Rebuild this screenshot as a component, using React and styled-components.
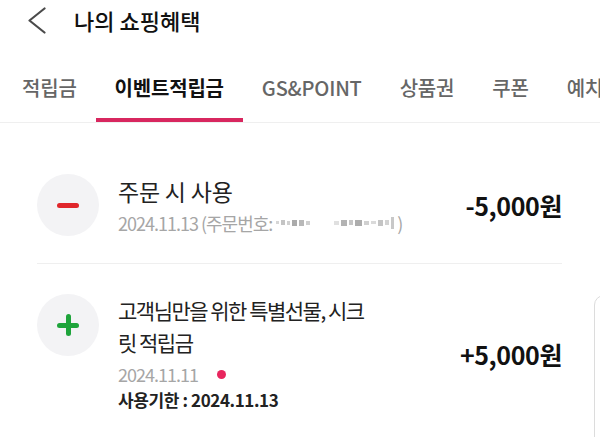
import React from "react";
import styled, { createGlobalStyle } from "styled-components";

const FONT = `"Noto Sans CJK KR", "Noto Sans", sans-serif`;

const GlobalStyle = createGlobalStyle`
  html, body {
    margin: 0;
    padding: 0;
    background: #ffffff;
  }
  body {
    font-family: ${FONT};
    color: #222;
    overflow: hidden;
  }
`;

const TABS = ["적립금", "이벤트적립금", "GS&POINT", "상품권", "쿠폰", "예치금"];
const ACTIVE_TAB = 1;

// pixelated order number: [width, height, shade]
const MASK = [
  [3, 3, "#d6d6d6"], [4, 5, "#c4c4c4"], [3, 4, "#d0d0d0"], [5, 6, "#ababab"], [5, 6, "#b8b8b8"], [4, 4, "#cfcfcf"],
  [20, 0, "transparent"], [5, 4, "#e0e0e0"], [6, 6, "#b3b3b3"], [4, 5, "#c6c6c6"], [7, 6, "#adadad"],
  [5, 4, "#d0d0d0"], [5, 3, "#dadada"], [5, 6, "#c4c4c4"], [4, 5, "#d2d2d2"], [3, 12, "#c8c8c8"],
];

const Page = styled.div`
  position: relative;
  width: 600px;
  height: 437px;
  overflow: hidden;
  background: #fff;
`;

const Header = styled.div`
  display: flex;
  align-items: center;
  gap: 28px;
  height: 40px;
  padding: 0 0 0 28px;
`;

const BackButton = styled.button`
  display: flex;
  padding: 0;
  border: 0;
  background: none;
  cursor: pointer;
`;

const HeaderTitle = styled.h1`
  margin: 0;
  font-family: ${FONT};
  font-size: 22px;
  font-weight: 500;
  letter-spacing: 0;
  color: #111;
`;

const TabBar = styled.div`
  display: flex;
  margin-top: 16px;
  padding-left: 3px;
  border-bottom: 1px solid #efefef;
  white-space: nowrap;
  overflow: hidden;
`;

const Tab = styled.div`
  flex: none;
  padding: 18px 19px 16px;
  font-size: 20px;
  line-height: 28px;
  letter-spacing: -0.2px;
  font-weight: ${({ $active }) => ($active ? 700 : 500)};
  color: ${({ $active }) => ($active ? "#111" : "#666")};
  border-bottom: 4px solid ${({ $active }) => ($active ? "#d8275f" : "transparent")};
`;

const List = styled.div`
  padding: 21px 38px 0 37px;
`;

const Row = styled.div`
  display: flex;
  align-items: center;
  padding: 30px 0 27px;
  border-bottom: ${({ $last }) => ($last ? "none" : "1px solid #efefef")};
`;

const IconCircle = styled.div`
  position: relative;
  flex: none;
  align-self: flex-start;
  width: 62px;
  height: 62px;
  border-radius: 50%;
  background: #f3f3f5;
  display: flex;
  align-items: center;
  justify-content: center;
`;

const Bar = styled.span`
  position: absolute;
  width: ${({ $vertical }) => ($vertical ? "5px" : "22px")};
  height: ${({ $vertical }) => ($vertical ? "22px" : "5px")};
  border-radius: 3px;
  background: ${({ $color }) => $color};
`;

const Body = styled.div`
  flex: 1;
  min-width: 0;
  margin-left: 19px;
`;

const Title = styled.div`
  width: 252px;
  font-size: ${({ $size }) => $size}px;
  letter-spacing: ${({ $spacing }) => $spacing}px;
  line-height: 32px;
  color: #222;
`;

const DateLine = styled.div`
  display: flex;
  align-items: center;
  margin-top: 3px;
  font-size: 18px;
  line-height: 26px;
  letter-spacing: -1px;
  color: #a6a6a6;
`;

const Mask = styled.span`
  display: inline-flex;
  align-items: center;
  gap: 2px;
  margin: 0 3px 0 4px;
`;

const MaskBlock = styled.span`
  display: block;
  width: ${({ $w }) => $w}px;
  height: ${({ $h }) => $h}px;
  background: ${({ $c }) => $c};
`;

const NewDot = styled.span`
  width: 9px;
  height: 9px;
  margin-left: 19px;
  border-radius: 50%;
  background: #e8265e;
`;

const Deadline = styled.div`
  font-size: 17px;
  line-height: 26px;
  font-weight: 700;
  letter-spacing: -0.4px;
  color: #222;
`;

const Amount = styled.div`
  flex: none;
  font-size: 25px;
  font-weight: 700;
  letter-spacing: -0.4px;
  color: #111;
`;

const SideSheet = styled.div`
  position: absolute;
  left: 594px;
  top: 295px;
  width: 40px;
  height: 200px;
  border: 1px solid #dcdcdc;
  border-radius: 10px;
  background: #fff;
`;

const ChevronLeft = () => (
  <svg width="18" height="27" viewBox="0 0 18 27" fill="none">
    <polyline points="16.5,1.5 1.5,13.5 16.5,25.5" stroke="#4a4a4a" strokeWidth="2.2" strokeLinecap="round" strokeLinejoin="round" />
  </svg>
);

const Sign = ({ plus }) => {
  const color = plus ? "#1ea43b" : "#e0262b";
  return (
    <IconCircle>
      <Bar $color={color} />
      {plus && <Bar $color={color} $vertical />}
    </IconCircle>
  );
};

export default function App() {
  return (
    <Page>
      <GlobalStyle />
      <Header>
        <BackButton aria-label="뒤로">
          <ChevronLeft />
        </BackButton>
        <HeaderTitle>나의 쇼핑혜택</HeaderTitle>
      </Header>

      <TabBar>
        {TABS.map((t, i) => (
          <Tab key={t} $active={i === ACTIVE_TAB}>{t}</Tab>
        ))}
      </TabBar>

      <List>
        <Row>
          <Sign />
          <Body>
            <Title $size={23} $spacing={-0.2}>주문 시 사용</Title>
            <DateLine>
              2024.11.13 (주문번호:
              <Mask>
                {MASK.map(([w, h, c], i) => (
                  <MaskBlock key={i} $w={w} $h={h} $c={c} />
                ))}
              </Mask>
              )
            </DateLine>
          </Body>
          <Amount>-5,000원</Amount>
        </Row>

        <Row $last>
          <Sign plus />
          <Body>
            <Title $size={21} $spacing={-1.5}>고객님만을 위한 특별선물, 시크릿 적립금</Title>
            <DateLine>
              2024.11.11
              <NewDot />
            </DateLine>
            <Deadline>사용기한 : 2024.11.13</Deadline>
          </Body>
          <Amount>+5,000원</Amount>
        </Row>
      </List>

      <SideSheet />
    </Page>
  );
}
